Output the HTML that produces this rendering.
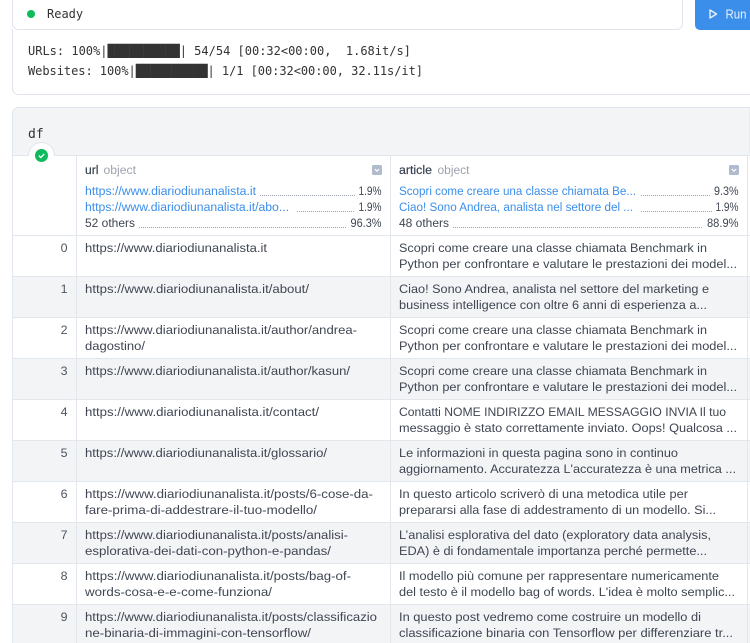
<!DOCTYPE html>
<html><head><meta charset="utf-8"><style>
html,body{margin:0;padding:0;background:#fff;width:750px;height:643px;overflow:hidden}
svg{display:block;position:absolute;left:0;top:0}
text{font-family:"Liberation Sans",sans-serif;font-size:12.4px;fill:#3f4652}
.m{font-family:"DejaVu Sans Mono",monospace;font-size:12px;fill:#333;white-space:pre}
.l{fill:#3b8eea}
.g{fill:#9ca3af}
.h{fill:#374151;font-weight:500;stroke:#374151;stroke-width:.2}
.i{text-anchor:end;fill:#4b5563}
.d{stroke:#9ca3af;stroke-width:1;stroke-dasharray:1 1;fill:none}
.b{stroke:#e2e7ee;stroke-width:1;fill:none}
</style></head><body>
<svg width="750" height="643" viewBox="0 0 750 643" xmlns="http://www.w3.org/2000/svg">
<!-- Ready box -->
<rect x="12.5" y="-12" width="670" height="41.5" rx="6" fill="#fff" stroke="#dfe4ec"/>
<circle cx="31" cy="14" r="4" fill="#0dba5c"/>
<text class="m" x="47" y="18">Ready</text>
<!-- Run button -->
<rect x="695" y="-8" width="70" height="38" rx="5" fill="#3b8eea"/>
<path d="M710 10 L710 18 L716.5 14 Z" fill="none" stroke="#e8f1fd" stroke-width="1.4" stroke-linejoin="round"/>
<text x="725.5" y="18.5" textLength="21" lengthAdjust="spacingAndGlyphs" style="fill:#e8f1fd;font-size:12.5px">Run</text>
<!-- output -->
<path class="b" d="M12.5 29V88a6 6 0 0 0 6 6.5H750" style="stroke:#dfe4ec"/>
<text class="m" x="28" y="55">URLs: 100%|██████████| 54/54 [00:32&lt;00:00,  1.68it/s]</text>
<text class="m" x="28" y="75" textLength="395" lengthAdjust="spacing">Websites: 100%|██████████| 1/1 [00:32&lt;00:00, 32.11s/it]</text>
<!-- df block -->
<path d="M750 107.5H18.5a6 6 0 0 0 -6 6V155.5H750Z" fill="#f3f4f6" stroke="#dfe4ec"/>
<text class="m" x="28" y="138" style="font-size:13px">df</text>
<!-- table backgrounds -->
<rect x="13" y="156" width="737" height="487" fill="#fff"/>
<rect x="13" y="277" width="737" height="41" fill="#f3f4f6"/>
<rect x="13" y="359" width="737" height="41" fill="#f3f4f6"/>
<rect x="13" y="441" width="737" height="41" fill="#f3f4f6"/>
<rect x="13" y="523" width="737" height="41" fill="#f3f4f6"/>
<rect x="13" y="605" width="737" height="38" fill="#f3f4f6"/>
<!-- grid -->
<path class="b" d="M13 155.5H750M13 235.5H750M13 276.5H750M13 317.5H750M13 358.5H750M13 399.5H750M13 440.5H750M13 481.5H750M13 522.5H750M13 563.5H750M13 604.5H750"/>
<path class="b" d="M12.5 155V643M76.5 155V643M390.5 155V643M747.5 155V643"/>
<!-- status tab -->
<path d="M28.5 155.5a13 13 0 0 1 26 0" fill="#fff" stroke="#dfe4ec"/>
<rect x="29" y="155" width="25" height="2" fill="#fff"/>
<circle cx="41.5" cy="155.5" r="6.5" fill="#0dba5c"/>
<path d="M38.8 155.6l2 2 3.4-3.6" fill="none" stroke="#fff" stroke-width="1.3"/>
<!-- headers -->
<text class="h" x="85" y="174" textLength="13.5" lengthAdjust="spacingAndGlyphs">url</text>
<text class="g" x="103.5" y="174" textLength="32.5" lengthAdjust="spacingAndGlyphs">object</text>
<rect x="372" y="165" width="10" height="10" rx="1.5" fill="#b0bccd"/>
<path d="M374.8 169l2.2 2.2 2.2-2.2" fill="none" stroke="#fff" stroke-width="1.2"/>
<text class="h" x="399" y="174" textLength="33" lengthAdjust="spacingAndGlyphs">article</text>
<text class="g" x="437.5" y="174" textLength="32" lengthAdjust="spacingAndGlyphs">object</text>
<rect x="729" y="165" width="10" height="10" rx="1.5" fill="#b0bccd"/>
<path d="M731.8 169l2.2 2.2 2.2-2.2" fill="none" stroke="#fff" stroke-width="1.2"/>
<!-- url stats -->
<text class="l" x="85" y="195" textLength="171" lengthAdjust="spacingAndGlyphs">https://www.diariodiunanalista.it</text>
<path class="d" d="M260 195.5H355"/>
<text x="358.5" y="195" textLength="23" lengthAdjust="spacingAndGlyphs">1.9%</text>
<text class="l" x="85" y="211" textLength="204" lengthAdjust="spacingAndGlyphs">https://www.diariodiunanalista.it/abo...</text>
<path class="d" d="M297 211.5H355"/>
<text x="358.5" y="211" textLength="23" lengthAdjust="spacingAndGlyphs">1.9%</text>
<text x="85" y="227" textLength="50" lengthAdjust="spacingAndGlyphs">52 others</text>
<path class="d" d="M139 227.5H346"/>
<text x="350.5" y="227" textLength="31" lengthAdjust="spacingAndGlyphs">96.3%</text>
<!-- article stats -->
<text class="l" x="399" y="195" textLength="237" lengthAdjust="spacingAndGlyphs">Scopri come creare una classe chiamata Be...</text>
<path class="d" d="M641 195.5H710"/>
<text x="714" y="195" textLength="24.5" lengthAdjust="spacingAndGlyphs">9.3%</text>
<text class="l" x="399" y="211" textLength="234" lengthAdjust="spacingAndGlyphs">Ciao! Sono Andrea, analista nel settore del ...</text>
<path class="d" d="M641 211.5H712"/>
<text x="715.5" y="211" textLength="23" lengthAdjust="spacingAndGlyphs">1.9%</text>
<text x="399" y="227" textLength="50" lengthAdjust="spacingAndGlyphs">48 others</text>
<path class="d" d="M453 227.5H703"/>
<text x="707" y="227" textLength="31.5" lengthAdjust="spacingAndGlyphs">88.9%</text>
<!-- index -->
<text class="i" x="67.5" y="252">0</text>
<text class="i" x="67.5" y="293">1</text>
<text class="i" x="67.5" y="334">2</text>
<text class="i" x="67.5" y="375">3</text>
<text class="i" x="67.5" y="416">4</text>
<text class="i" x="67.5" y="457">5</text>
<text class="i" x="67.5" y="498">6</text>
<text class="i" x="67.5" y="539">7</text>
<text class="i" x="67.5" y="580">8</text>
<text class="i" x="67.5" y="621">9</text>
<!-- urls -->
<text x="85" y="252" textLength="182" lengthAdjust="spacingAndGlyphs">https://www.diariodiunanalista.it</text>
<text x="85" y="293" textLength="224" lengthAdjust="spacingAndGlyphs">https://www.diariodiunanalista.it/about/</text>
<text x="85" y="334" textLength="272" lengthAdjust="spacingAndGlyphs">https://www.diariodiunanalista.it/author/andrea-</text>
<text x="85" y="350" textLength="60" lengthAdjust="spacingAndGlyphs">dagostino/</text>
<text x="85" y="375" textLength="265" lengthAdjust="spacingAndGlyphs">https://www.diariodiunanalista.it/author/kasun/</text>
<text x="85" y="416" textLength="234" lengthAdjust="spacingAndGlyphs">https://www.diariodiunanalista.it/contact/</text>
<text x="85" y="457" textLength="242" lengthAdjust="spacingAndGlyphs">https://www.diariodiunanalista.it/glossario/</text>
<text x="85" y="498" textLength="288" lengthAdjust="spacingAndGlyphs">https://www.diariodiunanalista.it/posts/6-cose-da-</text>
<text x="85" y="514" textLength="232" lengthAdjust="spacingAndGlyphs">fare-prima-di-addestrare-il-tuo-modello/</text>
<text x="85" y="539" textLength="263" lengthAdjust="spacingAndGlyphs">https://www.diariodiunanalista.it/posts/analisi-</text>
<text x="85" y="555" textLength="246" lengthAdjust="spacingAndGlyphs">esplorativa-dei-dati-con-python-e-pandas/</text>
<text x="85" y="580" textLength="266" lengthAdjust="spacingAndGlyphs">https://www.diariodiunanalista.it/posts/bag-of-</text>
<text x="85" y="596" textLength="187" lengthAdjust="spacingAndGlyphs">words-cosa-e-e-come-funziona/</text>
<text x="85" y="621" textLength="292" lengthAdjust="spacingAndGlyphs">https://www.diariodiunanalista.it/posts/classificazio</text>
<text x="85" y="637" textLength="226" lengthAdjust="spacingAndGlyphs">ne-binaria-di-immagini-con-tensorflow/</text>
<!-- articles -->
<text x="399" y="252" textLength="308" lengthAdjust="spacingAndGlyphs">Scopri come creare una classe chiamata Benchmark in</text>
<text x="399" y="268" textLength="338" lengthAdjust="spacingAndGlyphs">Python per confrontare e valutare le prestazioni dei model...</text>
<text x="399" y="293" textLength="310" lengthAdjust="spacingAndGlyphs">Ciao! Sono Andrea, analista nel settore del marketing e</text>
<text x="399" y="309" textLength="308" lengthAdjust="spacingAndGlyphs">business intelligence con oltre 6 anni di esperienza a...</text>
<text x="399" y="334" textLength="308" lengthAdjust="spacingAndGlyphs">Scopri come creare una classe chiamata Benchmark in</text>
<text x="399" y="350" textLength="338" lengthAdjust="spacingAndGlyphs">Python per confrontare e valutare le prestazioni dei model...</text>
<text x="399" y="375" textLength="308" lengthAdjust="spacingAndGlyphs">Scopri come creare una classe chiamata Benchmark in</text>
<text x="399" y="391" textLength="338" lengthAdjust="spacingAndGlyphs">Python per confrontare e valutare le prestazioni dei model...</text>
<text x="399" y="416" textLength="327" lengthAdjust="spacingAndGlyphs">Contatti NOME INDIRIZZO EMAIL MESSAGGIO INVIA Il tuo</text>
<text x="399" y="432" textLength="338" lengthAdjust="spacingAndGlyphs">messaggio è stato correttamente inviato. Oops! Qualcosa ...</text>
<text x="399" y="457" textLength="279" lengthAdjust="spacingAndGlyphs">Le informazioni in questa pagina sono in continuo</text>
<text x="399" y="473" textLength="337" lengthAdjust="spacingAndGlyphs">aggiornamento. Accuratezza L'accuratezza è una metrica ...</text>
<text x="399" y="498" textLength="289" lengthAdjust="spacingAndGlyphs">In questo articolo scriverò di una metodica utile per</text>
<text x="399" y="514" textLength="317" lengthAdjust="spacingAndGlyphs">prepararsi alla fase di addestramento di un modello. Si...</text>
<text x="399" y="539" textLength="312" lengthAdjust="spacingAndGlyphs">L’analisi esplorativa del dato (exploratory data analysis,</text>
<text x="399" y="555" textLength="308" lengthAdjust="spacingAndGlyphs">EDA) è di fondamentale importanza perché permette...</text>
<text x="399" y="580" textLength="320" lengthAdjust="spacingAndGlyphs">Il modello più comune per rappresentare numericamente</text>
<text x="399" y="596" textLength="336" lengthAdjust="spacingAndGlyphs">del testo è il modello bag of words. L'idea è molto semplic...</text>
<text x="399" y="621" textLength="302" lengthAdjust="spacingAndGlyphs">In questo post vedremo come costruire un modello di</text>
<text x="399" y="637" textLength="334" lengthAdjust="spacingAndGlyphs">classificazione binaria con Tensorflow per differenziare tr...</text>
</svg>
</body></html>
